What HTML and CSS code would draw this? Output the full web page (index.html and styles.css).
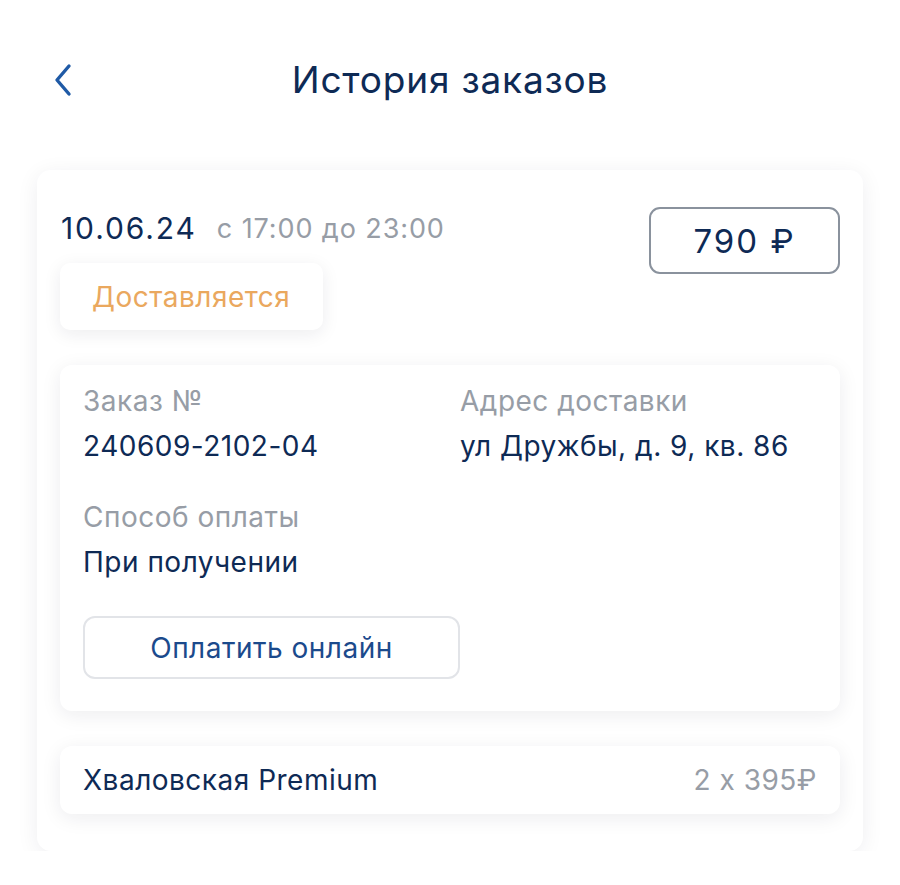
FILE: index.html
```html
<!DOCTYPE html>
<html lang="ru">
<head>
<meta charset="utf-8">
<link rel="stylesheet" href="styles.css">
</head>
<body>
<header class="topbar">
  <button class="back" aria-label="Назад">
    <svg width="20" height="34" viewBox="0 0 20 34"><path d="M16 3 L4 17 L16 31" fill="none" stroke="#1f5aa6" stroke-width="3.4" stroke-linecap="round" stroke-linejoin="round"/></svg>
  </button>
  <h1 class="title">История заказов</h1>
</header>
<main class="card">
  <div class="card-top">
    <div class="card-left">
      <div class="date-line"><span class="date">10.06.24</span><span class="time">с 17:00 до 23:00</span></div>
      <div class="status">Доставляется</div>
    </div>
    <div class="price">790 ₽</div>
  </div>
  <section class="details">
    <div class="grid">
      <div class="field">
        <div class="label">Заказ №</div>
        <div class="value">240609-2102-04</div>
      </div>
      <div class="field">
        <div class="label">Адрес доставки</div>
        <div class="value">ул Дружбы, д. 9, кв. 86</div>
      </div>
      <div class="field">
        <div class="label">Способ оплаты</div>
        <div class="value">При получении</div>
      </div>
    </div>
    <button class="pay">Оплатить онлайн</button>
  </section>
  <section class="item">
    <span class="item-name">Хваловская Premium</span>
    <span class="item-qty">2 х 395₽</span>
  </section>
</main>
</body>
</html>
```
FILE: styles.css
```css
* { box-sizing: border-box; }
body {
  margin: 0;
  background: #ffffff;
  font-family: Inter, Roboto, "Noto Sans", sans-serif;
  color: #0e2a55;
}
.topbar {
  position: relative;
  height: 160px;
  display: flex;
  align-items: flex-start;
  justify-content: center;
  padding-top: 56px;
}
.back {
  position: absolute;
  left: 53px;
  top: 63px;
  background: none;
  border: 0;
  padding: 0;
  width: 20px;
  height: 34px;
}
.title {
  margin: 0;
  font-size: 37px;
  letter-spacing: 0.8px;
  font-weight: 400;
  line-height: 48px;
  color: #0e2a55;
}
.card {
  margin: 10px 37px 0;
  background: #fff;
  border-radius: 14px;
  box-shadow: 0 4px 22px rgba(20, 30, 50, 0.07);
  padding: 37px 23px 37px;
}
.card-top {
  display: flex;
  justify-content: space-between;
  align-items: flex-start;
}
.card-left {
  display: flex;
  flex-direction: column;
  align-items: flex-start;
}
.date-line {
  height: 42px;
  display: flex;
  align-items: center;
  gap: 20px;
  padding-left: 1px;
}
.date { font-size: 30px; letter-spacing: 1.9px; color: #0e2a55; }
.time { font-size: 27px; letter-spacing: 0.9px; color: #979da6; }
.status {
  margin-top: 14px;
  height: 67px;
  display: flex;
  align-items: center;
  padding: 0 33px 0 32px;
  font-size: 28px;
  letter-spacing: 0.5px;
  color: #eaa85e;
  background: #fff;
  border-radius: 10px;
  box-shadow: 0 4px 18px rgba(20, 30, 50, 0.08);
}
.price {
  width: 191px;
  height: 67px;
  border: 2px solid #8a929d;
  border-radius: 11px;
  display: flex;
  align-items: center;
  justify-content: center;
  font-size: 33px;
  letter-spacing: 2px;
  color: #0e2a55;
}
.details {
  margin-top: 35px;
  background: #fff;
  border-radius: 12px;
  box-shadow: 0 4px 20px rgba(20, 30, 50, 0.08);
  padding: 19px 23px 32px;
}
.grid {
  display: grid;
  grid-template-columns: 377px 1fr;
  row-gap: 37px;
}
.label {
  font-size: 28px;
  letter-spacing: 0.5px;
  line-height: 34px;
  color: #979da6;
}
.value {
  margin-top: 11px;
  font-size: 28px;
  letter-spacing: 0.5px;
  line-height: 34px;
  color: #0e2a55;
}
.pay {
  margin-top: 37px;
  width: 377px;
  height: 63px;
  border: 2px solid #e2e4e8;
  border-radius: 12px;
  background: #fff;
  font-family: inherit;
  font-size: 28px;
  letter-spacing: 0.5px;
  color: #1b4a8c;
}
.item {
  margin-top: 35px;
  height: 68px;
  background: #fff;
  border-radius: 12px;
  box-shadow: 0 4px 20px rgba(20, 30, 50, 0.08);
  padding: 0 23px;
  display: flex;
  align-items: center;
  justify-content: space-between;
}
.item-name { font-size: 28px; letter-spacing: 0.5px; color: #0e2a55; }
.item-qty { font-size: 28px; letter-spacing: 0.5px; color: #979da6; }
```
